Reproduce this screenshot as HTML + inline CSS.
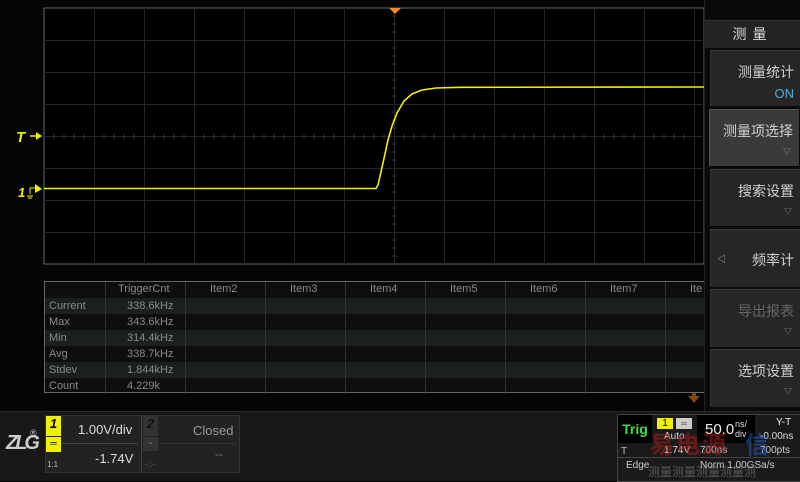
<!DOCTYPE html>
<html><head><meta charset="utf-8"><style>
body{margin:0;width:800px;height:480px;background:#050505;overflow:hidden;position:relative;font-family:"Liberation Sans","Noto Sans CJK SC",sans-serif;}
.abs{position:absolute}
.btn{position:absolute;left:710px;width:90px;background:#262626;border-top:1px solid #3a3a3a;border-left:1px solid #333;color:#d0d0d0;font-size:14px;text-align:right;box-sizing:border-box;padding-right:6px}
.tri{position:absolute;right:8px;font-size:8px;color:#999}
</style></head><body>
<svg class="abs" style="left:0;top:0" width="800" height="480">
<rect x="44" y="8" width="660" height="256" fill="#000" stroke="#666" stroke-width="1"/>
<g stroke="#262626" stroke-width="1">
<line x1="94.5" y1="8" x2="94.5" y2="264"/><line x1="144.5" y1="8" x2="144.5" y2="264"/><line x1="194.5" y1="8" x2="194.5" y2="264"/><line x1="244.5" y1="8" x2="244.5" y2="264"/><line x1="294.5" y1="8" x2="294.5" y2="264"/><line x1="344.5" y1="8" x2="344.5" y2="264"/><line x1="394.5" y1="8" x2="394.5" y2="264"/><line x1="444.5" y1="8" x2="444.5" y2="264"/><line x1="494.5" y1="8" x2="494.5" y2="264"/><line x1="544.5" y1="8" x2="544.5" y2="264"/><line x1="594.5" y1="8" x2="594.5" y2="264"/><line x1="644.5" y1="8" x2="644.5" y2="264"/><line x1="694.5" y1="8" x2="694.5" y2="264"/>
<line x1="44" y1="40.5" x2="704" y2="40.5"/><line x1="44" y1="72.5" x2="704" y2="72.5"/><line x1="44" y1="104.5" x2="704" y2="104.5"/><line x1="44" y1="136.5" x2="704" y2="136.5"/><line x1="44" y1="168.5" x2="704" y2="168.5"/><line x1="44" y1="200.5" x2="704" y2="200.5"/><line x1="44" y1="232.5" x2="704" y2="232.5"/>
</g>
<path d="M54 134v5M64 134v5M74 134v5M84 134v5M104 134v5M114 134v5M124 134v5M134 134v5M154 134v5M164 134v5M174 134v5M184 134v5M204 134v5M214 134v5M224 134v5M234 134v5M254 134v5M264 134v5M274 134v5M284 134v5M304 134v5M314 134v5M324 134v5M334 134v5M354 134v5M364 134v5M374 134v5M384 134v5M404 134v5M414 134v5M424 134v5M434 134v5M454 134v5M464 134v5M474 134v5M484 134v5M504 134v5M514 134v5M524 134v5M534 134v5M554 134v5M564 134v5M574 134v5M584 134v5M604 134v5M614 134v5M624 134v5M634 134v5M654 134v5M664 134v5M674 134v5M684 134v5
M392 16h5M392 24h5M392 32h5M392 48h5M392 56h5M392 64h5M392 80h5M392 88h5M392 96h5M392 112h5M392 120h5M392 128h5M392 144h5M392 152h5M392 160h5M392 176h5M392 184h5M392 192h5M392 208h5M392 216h5M392 224h5M392 240h5M392 248h5M392 256h5" stroke="#333" stroke-width="1"/>
<polygon points="389,8 401,8 395,14" fill="#ff8a1a"/>
<path d="M44 188.5 L376 188.5 L378 185 L383 163 L388 140 L392 126 L397 113 L404 101 L412 94 L422 90 L436 88 L460 87.3 L704 87" fill="none" stroke="#f0f000" stroke-width="1.6"/>
<text x="16" y="142" fill="#f0f000" font-size="15" font-style="italic" font-weight="bold" font-family="Liberation Sans">T</text>
<line x1="30" y1="136" x2="37" y2="136" stroke="#f0f000" stroke-width="1.5"/><polygon points="36,132 42,136 36,140" fill="#f0f000"/>
<text x="18" y="197" fill="#f0f000" font-size="13" font-style="italic" font-weight="bold" font-family="Liberation Sans">1</text>
<path d="M30 194 V188 H35 M27 196 H33 M28 198 H32" stroke="#f0f000" stroke-width="1" fill="none"/><polygon points="35,184 42,189 35,193" fill="#f0f000"/>
<polygon points="688,396 700,396 694,403" fill="#7a4a10"/><rect x="692" y="391" width="4" height="6" fill="#7a4a10"/>
</svg>
<div class="abs" style="left:44px;top:281px;width:660px;height:112px;border:1px solid #666;border-right:none;box-sizing:border-box;background:#0e0e0e;font-size:11px;color:#8a8a8a;">
<div style="position:absolute;top:16px;left:0;width:660px;height:16px;background:#1b201e"></div>
<div style="position:absolute;top:48px;left:0;width:660px;height:16px;background:#1b201e"></div>
<div style="position:absolute;top:80px;left:0;width:660px;height:16px;background:#1b201e"></div>
<div style="position:absolute;top:0;left:60px;width:1px;height:112px;background:#333"></div>
<div style="position:absolute;top:0;left:140px;width:1px;height:112px;background:#333"></div>
<div style="position:absolute;top:0;left:220px;width:1px;height:112px;background:#333"></div>
<div style="position:absolute;top:0;left:300px;width:1px;height:112px;background:#333"></div>
<div style="position:absolute;top:0;left:380px;width:1px;height:112px;background:#333"></div>
<div style="position:absolute;top:0;left:460px;width:1px;height:112px;background:#333"></div>
<div style="position:absolute;top:0;left:540px;width:1px;height:112px;background:#333"></div>
<div style="position:absolute;top:0;left:620px;width:1px;height:112px;background:#333"></div>
<div style="position:absolute;top:1px;left:73px">TriggerCnt</div>
<div style="position:absolute;top:1px;left:165px">Item2</div>
<div style="position:absolute;top:1px;left:245px">Item3</div>
<div style="position:absolute;top:1px;left:325px">Item4</div>
<div style="position:absolute;top:1px;left:405px">Item5</div>
<div style="position:absolute;top:1px;left:485px">Item6</div>
<div style="position:absolute;top:1px;left:565px">Item7</div>
<div style="position:absolute;top:1px;left:645px">Ite</div>
<div style="position:absolute;top:16px;left:4px;line-height:16px">Current<br>Max<br>Min<br>Avg<br>Stdev<br>Count</div>
<div style="position:absolute;top:16px;left:82px;line-height:16px">338.6kHz<br>343.6kHz<br>314.4kHz<br>338.7kHz<br>1.844kHz<br>4.229k</div>
</div>
<div class="abs" style="left:704px;top:0;width:96px;height:411px;background:#0a0a0a;border-left:1px solid #222"></div>
<div class="abs" style="left:705px;top:20px;width:95px;height:27px;background:#232323;border-top:1px solid #333;color:#ddd;font-size:14px;text-align:center;line-height:27px;letter-spacing:6px">测量</div>
<div class="btn" style="top:50px;height:56px;padding-top:11px">测量统计<div style="color:#4ab0d8;font-size:13px;margin-top:4px">ON</div></div>
<div class="btn" style="top:109px;height:57px;left:709px;background:#3a3a3a;border-color:#555;padding-top:11px">测量项选择<div class="tri" style="top:36px">▽</div></div>
<div class="btn" style="top:169px;height:57px;padding-top:11px">搜索设置<div class="tri" style="top:36px">▽</div></div>
<div class="btn" style="top:229px;height:58px;padding-top:20px">频率计<div style="position:absolute;left:6px;top:22px;font-size:9px;color:#aaa">◁</div></div>
<div class="btn" style="top:289px;height:58px;padding-top:11px;color:#666">导出报表<div class="tri" style="top:36px">▽</div></div>
<div class="btn" style="top:349px;height:58px;padding-top:11px">选项设置<div class="tri" style="top:36px">▽</div></div>
<div class="abs" style="left:0;top:411px;width:800px;height:69px;background:#171717;border-top:1px solid #2a2a2a"></div>
<div class="abs" style="left:6px;top:432px;color:#ccc;font-size:20px;font-style:italic;font-weight:bold;letter-spacing:-3px">ZLG</div>
<div class="abs" style="left:30px;top:428px;color:#ccc;font-size:9px">®</div>
<div class="abs" style="left:45px;top:415px;width:193px;height:56px;background:#222;border:1px solid #333"></div>
<div class="abs" style="left:46px;top:416px;width:15px;height:20px;background:#f0f000;color:#000;font-size:13px;font-weight:bold;font-style:italic;text-align:center">1</div>
<div class="abs" style="left:46px;top:437px;width:15px;height:15px;background:#f0f000;color:#000;font-size:9px;text-align:center;line-height:13px">═</div>
<div class="abs" style="left:47px;top:460px;color:#bbb;font-size:8px">1:1</div>
<div class="abs" style="left:78px;top:422px;color:#ddd;font-size:13px">1.00V/div</div>
<div class="abs" style="left:62px;top:443px;width:76px;height:1px;background:#444"></div>
<div class="abs" style="left:95px;top:451px;color:#ddd;font-size:13px">-1.74V</div>
<div class="abs" style="left:141px;top:415px;width:1px;height:57px;background:#444"></div>
<div class="abs" style="left:143px;top:416px;width:15px;height:20px;background:#333;color:#111;font-size:13px;font-weight:bold;font-style:italic;text-align:center">2</div>
<div class="abs" style="left:143px;top:437px;width:15px;height:14px;background:#333;color:#999;font-size:10px;text-align:center;line-height:13px">-</div>
<div class="abs" style="left:145px;top:460px;color:#666;font-size:8px">-.:-</div>
<div class="abs" style="left:193px;top:423px;color:#999;font-size:13px">Closed</div>
<div class="abs" style="left:160px;top:443px;width:76px;height:1px;background:#333"></div>
<div class="abs" style="left:215px;top:447px;color:#777;font-size:12px">--</div>
<div class="abs" style="left:617px;top:414px;width:183px;height:66px;background:#1a1a1a;border:1px solid #444"></div>
<div class="abs" style="left:618px;top:415px;width:34px;height:28px;background:#000;color:#3de03d;font-size:14px;font-weight:bold;text-align:center;line-height:28px">Trig</div>
<div class="abs" style="left:657px;top:418px;width:16px;height:11px;background:#f0f000;color:#000;font-size:10px;text-align:center;line-height:11px">1</div>
<div class="abs" style="left:676px;top:418px;width:16px;height:11px;background:#ccc;color:#333;font-size:8px;text-align:center;line-height:11px">═</div>
<div class="abs" style="left:664px;top:431px;color:#ddd;font-size:10px">Auto</div>
<div class="abs" style="left:621px;top:446px;color:#bbb;font-size:10px">T</div>
<div class="abs" style="left:664px;top:445px;color:#ddd;font-size:10px">1.74V</div>
<div class="abs" style="left:697px;top:415px;width:58px;height:28px;background:#000"></div>
<div class="abs" style="left:705px;top:421px;color:#eee;font-size:15px">50.0</div>
<div class="abs" style="left:735px;top:419px;color:#ddd;font-size:9px;line-height:10px">ns/<br>div</div>
<div class="abs" style="left:776px;top:417px;color:#eee;font-size:10px">Y-T</div>
<div class="abs" style="left:760px;top:431px;color:#ddd;font-size:10px">-0.00ns</div>
<div class="abs" style="left:700px;top:445px;color:#ccc;font-size:10px">700ns</div>
<div class="abs" style="left:760px;top:445px;color:#ccc;font-size:10px">700pts</div>
<div class="abs" style="left:618px;top:457px;width:182px;height:1px;background:#444"></div>
<div class="abs" style="left:626px;top:460px;color:#ccc;font-size:10px">Edge</div>
<div class="abs" style="left:700px;top:460px;color:#ccc;font-size:10px">Norm 1.00GSa/s</div>
<div class="abs" style="left:650px;top:425px;color:rgba(170,30,30,0.55);font-size:24px;font-weight:bold;letter-spacing:2px">易电源</div>
<div class="abs" style="left:745px;top:425px;color:rgba(40,100,200,0.5);font-size:24px;font-weight:bold">信</div>
<div class="abs" style="left:648px;top:463px;color:rgba(150,150,150,0.5);font-size:12px">测量测量测量测量测</div>
</body></html>
